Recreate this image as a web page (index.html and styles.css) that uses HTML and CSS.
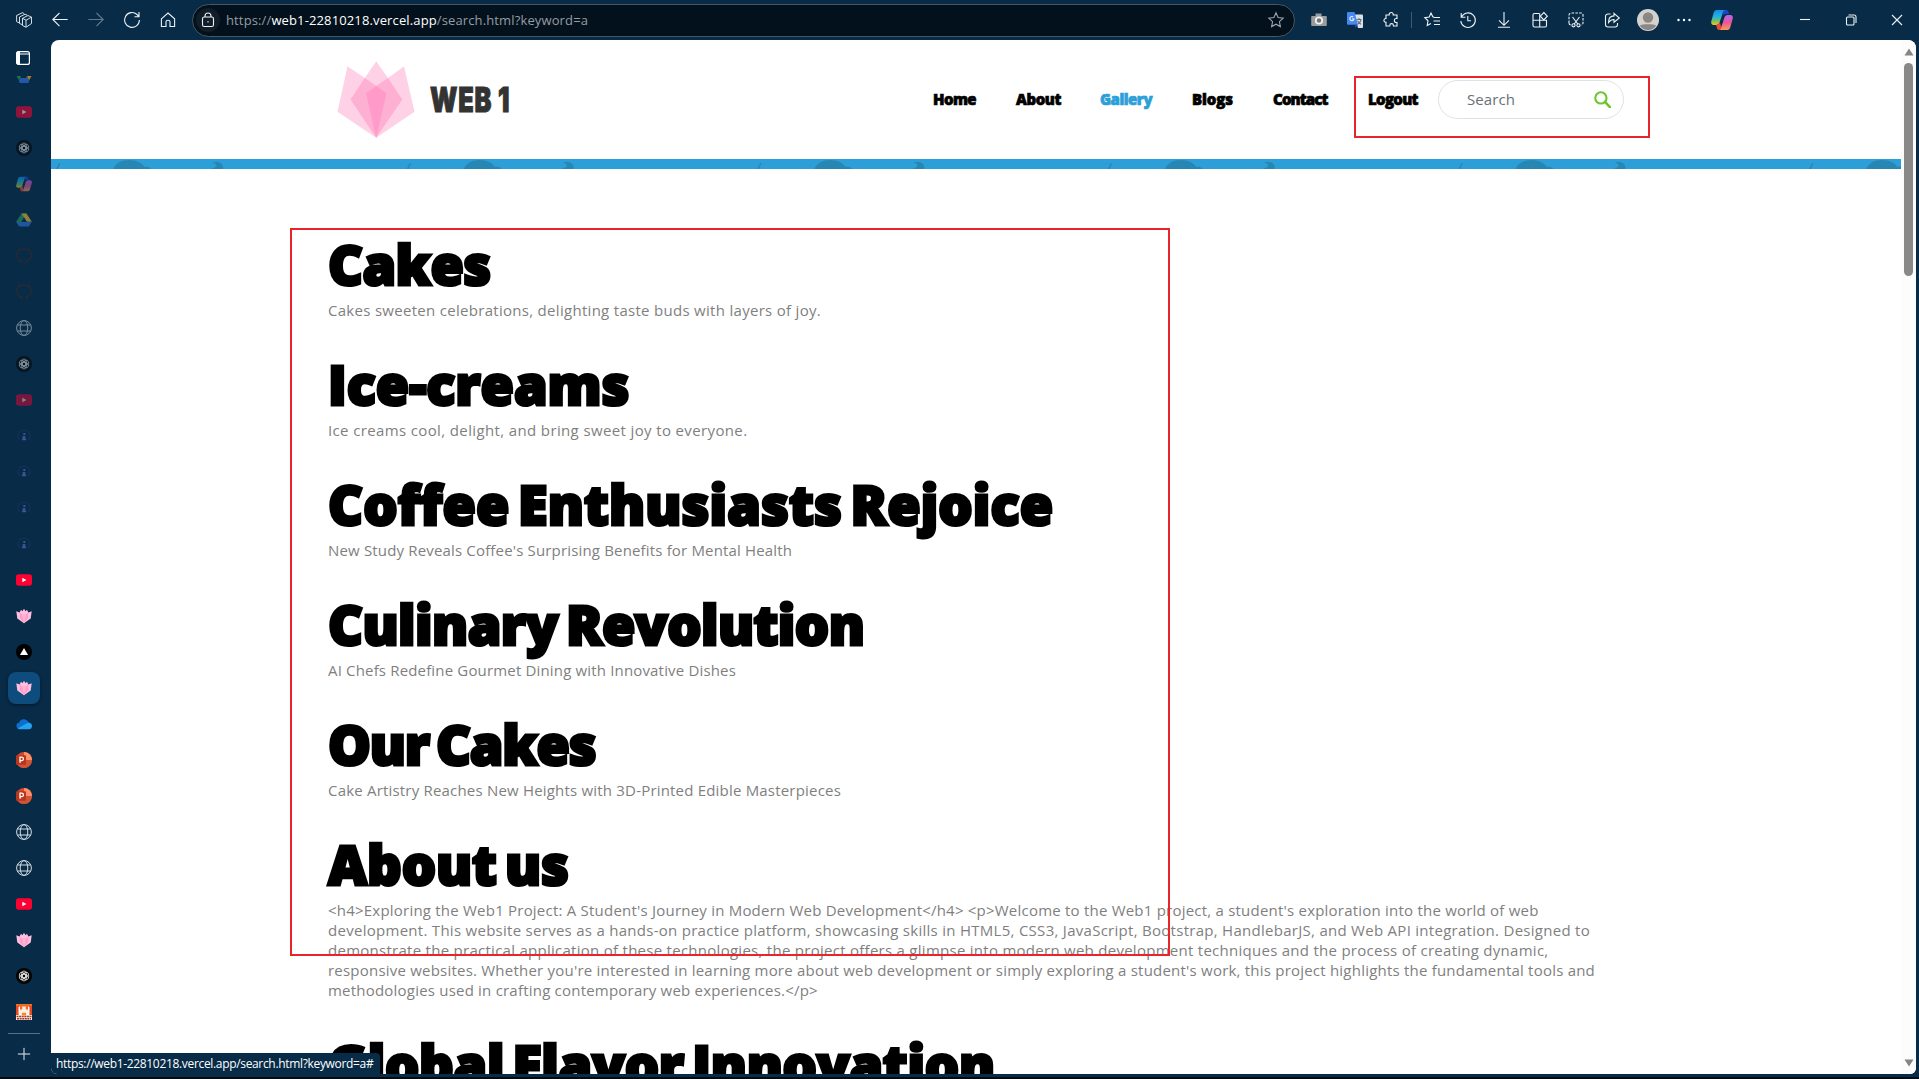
FILE: index.html
```html
<!DOCTYPE html>
<html lang="en">
<head>
<meta charset="utf-8">
<title>Web1 - Search</title>
<link rel="stylesheet" href="styles.css">
</head>
<body>
<svg class="defs" aria-hidden="true">
  <defs>
    <symbol id="yt" viewBox="0 0 16 16"><rect y="2.3" width="16" height="11.4" rx="2.6" fill="#ff0033"/><path d="M6.3 5.7v4.6L10.4 8z" fill="#fff"/></symbol>
    <symbol id="gpt" viewBox="0 0 16 16"><circle cx="8" cy="8" r="8" fill="#050505"/><g fill="none" stroke="#e8e8e8" stroke-width=".8"><rect x="5.7" y="3" width="4.6" height="7" rx="2.3"/><rect x="5.7" y="3" width="4.6" height="7" rx="2.3" transform="rotate(60 8 8)"/><rect x="5.7" y="3" width="4.6" height="7" rx="2.3" transform="rotate(120 8 8)"/><rect x="5.7" y="3" width="4.6" height="7" rx="2.3" transform="rotate(180 8 8)"/><rect x="5.7" y="3" width="4.6" height="7" rx="2.3" transform="rotate(240 8 8)"/><rect x="5.7" y="3" width="4.6" height="7" rx="2.3" transform="rotate(300 8 8)"/></g></symbol>
    <linearGradient id="cpa" x1="0" y1="0" x2="0" y2="1"><stop offset="0" stop-color="#168bea"/><stop offset=".45" stop-color="#22b5df"/><stop offset=".72" stop-color="#75bd62"/><stop offset="1" stop-color="#f3c51d"/></linearGradient>
    <linearGradient id="cpb" x1="0" y1="0" x2="0" y2="1"><stop offset="0" stop-color="#b565ee"/><stop offset=".5" stop-color="#e9559c"/><stop offset="1" stop-color="#fb9a53"/></linearGradient>
    <symbol id="copilot" viewBox="0 0 22 20"><path d="M12 0h3.500c1 0 1.500.8 1.800 1.600L18 4h-3.500c-1.300 0-2 .8-2.400 2z" fill="#1749c7"/><path d="M5.700 0H14c-1.400.5-1.800 1.500-2.200 2.800l-3 9C8.200 13.800 7 15 5.200 15H2.600C.7 15-.2 13.300.300 11.300L2.600 3C3.200 1 4 0 5.700 0z" fill="url(#cpa)"/><path d="M16.300 20H8c1.400-.5 1.800-1.500 2.200-2.800l3-9C13.800 6.200 15 5 16.800 5h2.600c1.900 0 2.800 1.700 2.300 3.700L19.400 17c-.6 2-1.400 3-3.100 3z" fill="url(#cpb)"/><path d="M8 20c-1 0-1.700-.7-2-1.700L5.200 15c2 0 3-1 3.600-3l1.400 5.200C9.800 18.500 9.400 19.500 8 20z" fill="#ee4a3c"/></symbol>
    <symbol id="drive" viewBox="0 0 16 16"><path d="M5.500 1.500h5L8 6 3.200 14.300.2 9.800z" fill="#25a35a"/><path d="M5.500 1.500h5l5.300 8.300h-5z" fill="#fdc42e"/><path d="M.2 9.800h15.600l-3 4.700H3.200z" fill="#3478e7"/><path d="M8 5.800l2.700 4.200H5.400z" fill="#082b47"/></symbol>
    <symbol id="drive-end" viewBox="0 0 16 7"><path d="M.5 0h4.700L3 4.500z" fill="#25a35a"/><path d="M11 0h4.500L13 4.500z" fill="#fdc42e"/><path d="M13 4.500L11 0l-1 2 1.500 3z" fill="#ea5548"/><path d="M4.500 2h7l1.800 3-1 2H3.800l-1-2z" fill="#3478e7"/></symbol>
    <symbol id="github" viewBox="0 0 16 16"><path d="M5.600 15.400v-2.200c-1.300.2-2-.2-2.600-1.200M10.400 15.400v-2.600c0-.7-.2-1.100-.6-1.400M5.600 13C2.500 12 .8 10 .8 7.200A7.200 7.200 0 0 1 3 2.200V.9l2 .8a8 8 0 0 1 6 0l2-.8v1.300a7.200 7.200 0 0 1 2.200 5c0 3-1.800 5-4.800 5.800" fill="none" stroke="#3a2b25" stroke-width="1.600"/></symbol>
    <symbol id="globe" viewBox="0 0 16 16"><g fill="none" stroke="#d3dde5" stroke-width="1"><circle cx="8" cy="8" r="7.400"/><ellipse cx="8" cy="8" rx="3.800" ry="7.400"/><path d="M1.400 5h13.200M1.400 11h13.200"/></g></symbol>
    <symbol id="info" viewBox="0 0 16 16"><path d="M3.500 12A6 6 0 1 1 12.500 12" fill="none" stroke="#1d4272" stroke-width=".9"/><path d="M7.300 5h2v2h-2zM6.700 8h2.600v2.600h.9v1.600H5.900v-1.600h.8z" fill="#6573d6"/></symbol>
    <symbol id="fox" viewBox="0 0 16 16"><path d="M.3 3.200l3.300 1.300L5 1.700l1.400 1.500L8 .8l1.600 2.400L11 1.700l1.400 2.800 3.300-1.300-1 7.200L8 15.300l-6.700-4.900z" fill="#ffc1df"/><path d="M4 4.600L8 8l4-3.400.5 5.200L8 15.300 3.500 9.800z" fill="#ff9fcb"/><path d="M6.300 6.800L8 5.500l1.700 1.300L8 15z" fill="#ffb5d7"/></symbol>
    <symbol id="vercel" viewBox="0 0 16 16"><circle cx="8" cy="8" r="8" fill="#000"/><path d="M8 4l4 6.900H4z" fill="#fff"/></symbol>
    <symbol id="onedrive" viewBox="0 0 16 16"><path d="M3 7.500A5 5 0 0 1 12.400 6a4 4 0 0 1 .4 7H3.500A3.300 3.300 0 0 1 3 6.500z" fill="#0b6fd0"/><path d="M2 12.300L9.500 8l3-1.200A3.600 3.600 0 0 1 16 10c0 2-1.400 3.300-3.300 3.300H3.500C2.800 13.300 2.200 12.900 2 12.300z" fill="#25a4ee"/></symbol>
    <symbol id="ppt" viewBox="0 0 16 16"><circle cx="8" cy="8" r="8" fill="#d6492b"/><path d="M8 0a8 8 0 0 1 8 8H8z" fill="#ff9069"/><path d="M0 8h16a8 8 0 0 1-16 0z" fill="#ce5535"/><rect y="3.200" width="10" height="9.600" rx=".8" fill="#b9351b"/><path d="M4 10.800V5.200h1.700a1.600 1.600 0 0 1 0 3.400H4" fill="none" stroke="#fff" stroke-width="1.300"/></symbol>
    <symbol id="shop" viewBox="0 0 16 16"><path d="M0 0h16v16H0z" fill="#f4ede4"/><path d="M0 0h16v2.500H12v3H9.800V2.500H6.200v3H4v-3H0z" fill="#ef6b22"/><path d="M0 2h3v9H0zM13 2h3v9h-3z" fill="#e9471f"/><path d="M3 3v7.500h2.500V8h5v2.500H13V3" fill="none" stroke="#fff"/><path d="M5.800 8.700h4.400v2.600H5.800z" fill="#f08a1c"/><path d="M.5 12.500h15M1 14.700h14" stroke="#a73826" stroke-width="1.400" stroke-dasharray="2 .6"/></symbol>
  </defs>
</svg>

<div class="browser">
  <header class="toolbar">
    <div class="nav-buttons">
      <svg class="ic" viewBox="0 0 16 16"><path d="M6.500 6.300L12 3.500l3.500 1.700v6.300L10 15.300 6.500 13.500zM10 8.200V15M10 8.200l5.500-3M10 8.200L6.500 6.300M6 12.500l-2.500-1V5L9 2.200l2 .9M3 10.800L.6 9.600V3.500L6.500.7l1.700.9"/></svg>
      <svg class="ic" viewBox="0 0 16 16"><path d="M15.700 7.500H.8M7.500 1L.8 7.500l6.700 6.700"/></svg>
      <svg class="ic dim" viewBox="0 0 16 16"><path d="M.3 7.500h15M8.500 1l6.700 6.500-6.700 6.700"/></svg>
      <svg class="ic" viewBox="0 0 16 16"><path d="M15.400 8A7.400 7.400 0 1 1 13 2.500l1.800 1.900M15 0v4.700h-4.500"/></svg>
      <svg class="ic" viewBox="0 0 16 16"><path d="M1.400 6.800L8 1l6.600 5.800v7.700H10V9.800c0-1-.7-1.500-2-1.500s-2 .5-2 1.500v4.700H1.400z"/></svg>
    </div>
    <div class="address">
      <span class="lock"><svg class="ic" viewBox="0 0 16 16"><rect x="2.500" y="5" width="11" height="9.500" rx="1.800"/><path d="M5 5V4a3 3 0 0 1 6 0v1"/><path d="M7.500 9.700h1" stroke-width="1.600"/></svg></span>
      <span class="url">https://<b>web1-22810218.vercel.app</b>/search.html?keyword=a</span>
      <svg class="ic star" viewBox="0 0 16 16"><path d="M8 .8l2.100 4.700 5.100.6-3.800 3.500 1 5L8 12.200l-4.400 2.400 1-5L.8 6.100l5.100-.6z"/></svg>
    </div>
    <div class="actions">
      <svg class="ic" viewBox="0 0 16 16"><path d="M1 4h3.500V1.500h6V4H15a.8.800 0 0 1 .8.800v8.400a.8.800 0 0 1-.8.800H1a.8.800 0 0 1-.8-.8V4.800A.8.800 0 0 1 1 4z" fill="#9b9b9b" stroke="none"/><circle cx="8" cy="8.500" r="3.200" stroke-width="1.800" fill="#777"/></svg>
      <svg class="ic" viewBox="0 0 16 16"><path d="M7 2.500h8a1 1 0 0 1 1 1V15a1 1 0 0 1-1 1h-4z" fill="#dce1e6" stroke="none"/><path d="M0 1a1 1 0 0 1 1-1h6.500L11 12.700H1a1 1 0 0 1-1-1z" fill="#4688f1" stroke="none"/><path d="M7.500 12.700H11L8.500 15.800z" fill="#3045b8" stroke="none"/><path d="M6.300 5A2.100 2.100 0 1 0 7 7H5"/><path d="M9.500 7.500h5M12 6v1.500M14 8c-.6 2-1.600 3.300-3.200 4M10.500 9l3.500 3.300" stroke="#65717c"/></svg>
      <svg class="ic" viewBox="0 0 16 16"><path d="M3 3h3.200V2.500a2 2 0 0 1 4 0V3H14v3.500h-.7a2 2 0 0 0 0 4h.7V14h-3.600v-.6a1.800 1.800 0 0 0-3.600 0v.6H3v-3.700h-.7a2 2 0 0 1 0-3.800H3z"/></svg>
      <i class="divider"></i>
      <svg class="ic" viewBox="0 0 16 16"><path d="M10 5L8.800 4.700 7 1 5.200 5 .8 5.600 4 8.800l-.8 4.700 3.700-2M9.500 5.500H16M9.500 9H16M10 12.500h6"/></svg>
      <svg class="ic" viewBox="0 0 16 16"><path d="M1.200 1v4.200h4.200M1.500 5A7.300 7.300 0 1 1 .8 9M7.800 4v4.800H11"/></svg>
      <svg class="ic" viewBox="0 0 16 16"><path d="M8 0v13M3 8.300l5 5 5-5M2 15.300h12"/></svg>
      <svg class="ic" viewBox="0 0 16 16"><path d="M7.500 1.500h-5A1.500 1.500 0 0 0 1 3v10.500A1.500 1.500 0 0 0 2.500 15H13a1.500 1.500 0 0 0 1.500-1.500V8.200H1M7.700 1.500V15"/><path d="M11.800.5l3.500 3.700-3.500 3.700-3.500-3.700z"/></svg>
      <svg class="ic" viewBox="0 0 16 16"><path d="M1 11V3a2 2 0 0 1 2-2h10a2 2 0 0 1 2 2v8a2 2 0 0 1-2 2M1 11a2 2 0 0 0 2 2" stroke-dasharray="2.500 1.300"/><path d="M4.500 5l5.300 7M11.500 5l-5.300 7"/><circle cx="5.500" cy="13.300" r="1.600"/><circle cx="10.500" cy="13.300" r="1.600"/></svg>
      <svg class="ic" viewBox="0 0 16 16"><path d="M6.500 2H4a2.500 2.500 0 0 0-2.500 2.500v8A2.500 2.500 0 0 0 4 15h7a2.500 2.500 0 0 0 2.500-2.500V11"/><path d="M10 1.300L15.300 6 10 10.300V7.500C7.500 7.500 6 8.500 4.500 10.500 4.500 6.500 6.500 4 10 3.900z"/></svg>
      <svg class="avatar" viewBox="0 0 22 22"><circle cx="11" cy="11" r="11" fill="#d4d2cf"/><circle cx="11" cy="8.500" r="5.200" fill="#8a8785"/><path d="M2.800 16.500c2-1.800 14.400-1.800 16.400 0C17 20 14 21 11 21s-6-1-8.200-4.500z" fill="#8a8785"/></svg>
      <svg class="ic" viewBox="0 0 16 16"><g fill="#fff" stroke="none"><circle cx="2.500" cy="8" r="1.200"/><circle cx="8" cy="8" r="1.200"/><circle cx="13.500" cy="8" r="1.200"/></g></svg>
      <svg class="copilot"><use href="#copilot"/></svg>
    </div>
    <div class="window-buttons">
      <svg class="ic" viewBox="0 0 16 16"><path d="M3 7.500h10"/></svg>
      <svg class="ic" viewBox="0 0 16 16"><rect x="3.500" y="5" width="7.500" height="8" rx="1"/><path d="M5.500 3h5.500a2 2 0 0 1 2 2v6"/></svg>
      <svg class="ic" viewBox="0 0 16 16"><path d="M3 3l10 10M13 3L3 13"/></svg>
    </div>
  </header>

  <div class="main">
    <aside class="tabs">
      <svg class="panel" viewBox="0 0 14 14"><rect x=".6" y=".6" width="12.800" height="12.800" rx="2" fill="none" stroke="#fff" stroke-width="1.200"/><path d="M1 1h2.500v12H1zM1 3h12" stroke="#fff" fill="#fff"/></svg>
      <svg class="cut"><use href="#drive-end"/></svg>
      <div class="tab faded"><svg><use href="#yt"/></svg></div>
      <div class="tab faded"><svg><use href="#gpt"/></svg></div>
      <div class="tab faded"><svg><use href="#copilot"/></svg></div>
      <div class="tab faded"><svg><use href="#drive"/></svg></div>
      <div class="tab faded"><svg><use href="#github"/></svg></div>
      <div class="tab faded"><svg><use href="#github"/></svg></div>
      <div class="tab faded"><svg><use href="#globe"/></svg></div>
      <div class="tab faded"><svg><use href="#gpt"/></svg></div>
      <div class="tab faded dark"><svg><use href="#yt"/></svg></div>
      <div class="tab faded"><svg><use href="#info"/></svg></div>
      <div class="tab faded"><svg><use href="#info"/></svg></div>
      <div class="tab faded"><svg><use href="#info"/></svg></div>
      <div class="tab faded"><svg><use href="#info"/></svg></div>
      <div class="tab"><svg><use href="#yt"/></svg></div>
      <div class="tab"><svg><use href="#fox"/></svg></div>
      <div class="tab"><svg><use href="#vercel"/></svg></div>
      <div class="tab active"><svg><use href="#fox"/></svg></div>
      <div class="tab"><svg><use href="#onedrive"/></svg></div>
      <div class="tab"><svg><use href="#ppt"/></svg></div>
      <div class="tab"><svg><use href="#ppt"/></svg></div>
      <div class="tab"><svg><use href="#globe"/></svg></div>
      <div class="tab"><svg><use href="#globe"/></svg></div>
      <div class="tab"><svg><use href="#yt"/></svg></div>
      <div class="tab"><svg><use href="#fox"/></svg></div>
      <div class="tab"><svg><use href="#gpt"/></svg></div>
      <div class="tab"><svg><use href="#shop"/></svg></div>
      <div class="new-tab"><svg class="ic" viewBox="0 0 16 16"><path d="M8 1v14M1 8h14"/></svg></div>
    </aside>

    <div class="viewport">
      <div class="page">
        <header class="site-header">
          <a class="logo">
            <svg viewBox="0 0 78 78"><path d="M10.500 5.300L27.800 17 39.200.3 51 17 67 5.300l10.500 45.400L39.200 76.700.5 50.700z" fill="#fed1e6"/><path d="M27.800 17L13.500 38.500 39.200 76.700l26.100-38.200L51 17l-11.800 8z" fill="#feb0d3"/><path d="M39.200 25L29 32.300l10.200 44.400 10.300-44.400z" fill="#ff9ac9"/></svg>
            <span>WEB 1</span>
          </a>
          <nav>
            <a class="n1">Home</a><a class="n2">About</a><a class="n3 current">Gallery</a><a class="n4">Blogs</a><a class="n5">Contact</a><a class="n6">Logout</a>
          </nav>
          <div class="search"><span>Search</span>
            <svg viewBox="0 0 16 16"><circle cx="6.500" cy="6.500" r="5.300" fill="none" stroke="#6fc52f" stroke-width="2"/><path d="M10.300 10.300l4.700 4.900" stroke="#6fc52f" stroke-width="2.400" stroke-linecap="round"/></svg>
          </div>
        </header>
        <svg class="band"><defs><pattern id="deco" x="1" width="350.600" height="10" patternUnits="userSpaceOnUse"><path d="M4 10l3-6h1.500L6 10zM61 10C64 4 69 1 77 1s13 3 15.500 7l3-.6 4 2.600zM160 3.500c5-2 12 0 11 6.500h-12.500c2-.6 5.500-1.500 5.500-3.500 0-1.500-1-2.500-4-3z" fill="#2687b5"/></pattern></defs><rect width="100%" height="100%" fill="url(#deco)"/></svg>

        <main class="results">
          <article><h2 class="h1">Cakes</h2><p><span class="p1">Cakes sweeten celebrations, delighting taste buds with layers of joy.</span></p></article>
          <article><h2 class="h2">Ice-creams</h2><p><span class="p2">Ice creams cool, delight, and bring sweet joy to everyone.</span></p></article>
          <article><h2 class="h3">Coffee Enthusiasts Rejoice</h2><p><span class="p3">New Study Reveals Coffee's Surprising Benefits for Mental Health</span></p></article>
          <article><h2 class="h4">Culinary Revolution</h2><p><span class="p3">AI Chefs Redefine Gourmet Dining with Innovative Dishes</span></p></article>
          <article><h2 class="h5">Our Cakes</h2><p><span class="p5">Cake Artistry Reaches New Heights with 3D-Printed Edible Masterpieces</span></p></article>
          <article><h2 class="h6">About us</h2><p><span class="p6">&lt;h4&gt;Exploring the Web1 Project: A Student's Journey in Modern Web Development&lt;/h4&gt; &lt;p&gt;Welcome to the Web1 project, a student's exploration into the world of web</span><br><span class="p7">development. This website serves as a hands-on practice platform, showcasing skills in HTML5, CSS3, JavaScript, Bootstrap, HandlebarJS, and Web API integration. Designed to</span><br><span class="p8">demonstrate the practical application of these technologies, the project offers a glimpse into modern web development techniques and the process of creating dynamic,</span><br><span class="p9">responsive websites. Whether you're interested in learning more about web development or simply exploring a student's work, this project highlights the fundamental tools and</span><br><span class="p10">methodologies used in crafting contemporary web experiences.&lt;/p&gt;</span></p></article>
          <article><h2 class="h7">Global Flavor Innovation</h2></article>
        </main>
      </div>
      <div class="scrollbar">
        <svg viewBox="0 0 10 8"><path d="M5 .5L9.500 7.500h-9z" fill="#858585"/></svg>
        <i></i>
        <svg viewBox="0 0 10 8"><path d="M5 7.500L9.500.5h-9z" fill="#858585"/></svg>
      </div>
      <div class="status">https://web1-22810218.vercel.app/search.html?keyword=a#</div>
    </div>
  </div>
</div>
<div class="mark mark-search"></div>
<div class="mark mark-results"></div>
</body>
</html>
```
FILE: styles.css
```css
* { box-sizing: border-box; }
body { margin: 0; background: #000; font-family: "Open Sans", "Noto Sans", sans-serif; overflow: hidden; }
svg { display: block; flex: none; }
.defs { position: absolute; width: 0; height: 0; }
.browser { display: flex; flex-direction: column; width: 1919px; height: 1079px; background: #082b47; border-bottom: 2px solid #020b12; }

/* browser toolbar */
.toolbar { display: flex; align-items: center; height: 40px; flex: none; padding-left: 16px; }
.ic { width: 16px; height: 16px; fill: none; stroke: #edf2f5; stroke-width: 1.1; overflow: visible; }
.dim { opacity: .4; }
.nav-buttons { display: flex; gap: 20px; width: 176px; }
.nav-buttons .ic:first-child { stroke-width: .9; }
.address { display: flex; align-items: center; width: 1103px; height: 33px; border: 1px solid #485663; border-radius: 17px; background: #03111d; padding: 0 10px 0 3px; }
.lock { display: grid; place-items: center; width: 24px; height: 24px; border-radius: 50%; background: #111d29; }
.url { flex: 1; margin-left: 6px; font-size: 13px; letter-spacing: .13px; color: #959ca3; white-space: nowrap; }
.url b { font-weight: 400; color: #fff; }
.star { opacity: .65; }
.actions { display: flex; align-items: center; gap: 20px; margin-left: 16px; }
.divider { width: 1px; height: 16px; background: #405b70; margin: 0 -8px; }
.avatar { width: 22px; height: 22px; margin: 0 -3px; }
.copilot { width: 22px; height: 20px; margin-left: -1px; }
.window-buttons { display: flex; gap: 30px; margin-left: auto; padding-right: 14px; }

/* vertical tab strip */
.main { display: flex; height: 1034px; }
.tabs { display: flex; flex-direction: column; align-items: center; width: 51px; padding: 11px 3px 0 0; }
.panel { width: 14px; height: 14px; margin-right: 2px; }
.cut { width: 16px; height: 7px; margin: 11px 0 11px; opacity: .6; }
.tab { display: grid; place-items: center; flex: none; width: 32px; height: 32px; margin: 2px 0; border-radius: 8px; }
.tab svg { width: 16px; height: 16px; }
.faded svg { opacity: .55; }
.dark svg { opacity: .45; }
.active { background: #0d4c7c; box-shadow: 0 1px 3px #04192a; }
.new-tab { display: grid; place-items: center; width: 32px; height: 40px; margin-top: 3px; border-top: 1px solid #597184; }
.new-tab .ic { width: 14px; height: 14px; }

/* page area */
.viewport { position: relative; display: flex; width: 1865px; height: 1034px; background: #fff; border-radius: 8px 8px 6px 6px; overflow: hidden; }
.page { width: 1850px; }
.site-header { display: flex; align-items: center; height: 119px; padding-left: 286px; }
.logo { display: flex; align-items: center; width: 596px; }
.logo svg { width: 78px; height: 78px; }
.logo span { display: inline-block; margin-left: 15px; font: 900 34px/40px Inter, sans-serif; color: #333; -webkit-text-stroke: 1px #333; letter-spacing: 1px; transform: scaleX(.745); transform-origin: left; white-space: nowrap; }
nav { display: flex; gap: 40px; width: 505px; margin-top: -2px; font: 800 15px/20px "Open Sans", sans-serif; color: #000; -webkit-text-stroke: .7px; }
nav a { white-space: nowrap; }
.n1 { width: 43px; letter-spacing: -.58px; }
.n2 { width: 44px; letter-spacing: -.41px; }
.n3 { width: 52px; letter-spacing: -.51px; }
.n4 { width: 41px; letter-spacing: -.1px; }
.n5 { width: 55px; letter-spacing: -.85px; }
.n6 { width: 50px; letter-spacing: -.7px; }
.current { color: #2d9fd8; }
.search { display: flex; align-items: center; justify-content: space-between; width: 186px; height: 39px; border: 1px solid #dee2e6; border-radius: 20px; padding: 0 12px 0 28px; font-size: 15px; letter-spacing: .1px; color: #6b7075; }
.search span { padding-bottom: 2px; }
.search svg { width: 17px; height: 17px; }
.band { width: 100%; height: 10px; background: #2d9fd8; }
.results { padding: 65px 0 0 277px; }
article { margin-bottom: 34px; }
h2 { margin: 0 0 13px; height: 53px; font: 800 54px/60px "Open Sans", sans-serif; color: #000; -webkit-text-stroke: 3px #000; word-spacing: -5.5px; white-space: nowrap; }
p { margin: 0; font-size: 15px; line-height: 20px; color: #7f7f7f; white-space: nowrap; }
.h1 { letter-spacing: -.6px; }
.h2 { letter-spacing: -.05px; }
.h3 { letter-spacing: .1px; }
.h4 { letter-spacing: -.55px; }
.h5 { letter-spacing: -1.25px; }
.h6 { letter-spacing: -.15px; }
.h7 { letter-spacing: -.25px; }
.p1 { letter-spacing: .295px; }
.p2 { letter-spacing: .37px; }
.p3 { letter-spacing: .165px; }
.p5 { letter-spacing: .194px; }
.p6 { letter-spacing: .217px; }
.p7 { letter-spacing: .28px; }
.p8 { letter-spacing: .272px; }
.p9 { letter-spacing: .216px; }
.p10 { letter-spacing: .21px; }

.scrollbar { display: flex; flex-direction: column; align-items: center; width: 15px; padding: 8px 0 7px; background: #fcfcfc; }
.scrollbar svg { width: 10px; height: 8px; }
.scrollbar i { width: 9px; height: 213px; margin: 7px 0 auto; border-radius: 5px; background: #888; }
.status { position: absolute; left: 0; bottom: 0; width: 329px; height: 21px; padding-left: 5px; background: #082b47; border-radius: 0 4px 0 0; font-size: 12px; line-height: 21px; letter-spacing: -.33px; color: #fff; white-space: nowrap; }

/* highlight frames over the page */
.mark { position: absolute; border: 2px solid #e8252b; }
.mark-search { left: 1354px; top: 76px; width: 296px; height: 62px; }
.mark-results { left: 290px; top: 228px; width: 880px; height: 728px; }
```
